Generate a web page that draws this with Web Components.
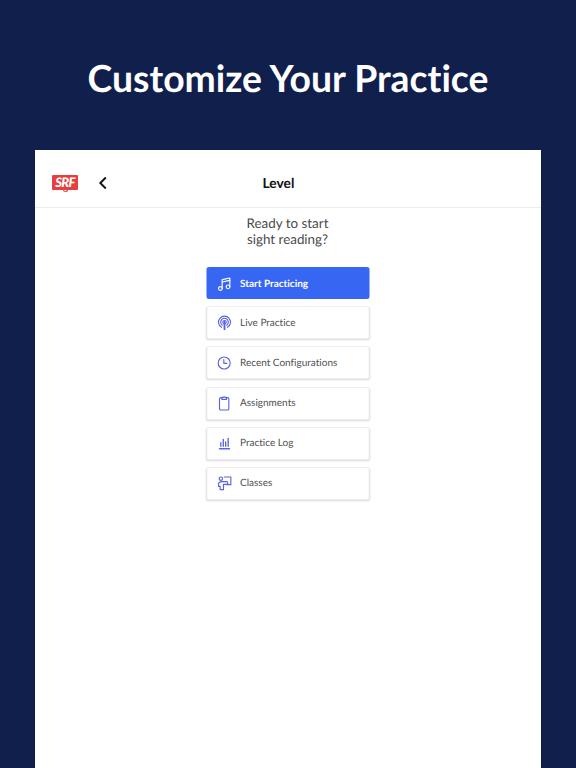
<!DOCTYPE html>
<html lang="en">
<head>
<meta charset="utf-8">
<title>Customize Your Practice</title>
<style>
  html, body { margin: 0; height: 100%; }
  body { background: #111f4d; font-family: Lato, "Open Sans", sans-serif; overflow: hidden; text-rendering: geometricPrecision; }
</style>
</head>
<body>
<promo-page>
  <span slot="title">Customize Your Practice</span>
  <app-header>Level</app-header>
  <practice-menu>
    <span slot="question">Ready to start<br>sight reading?</span>
    <menu-button icon="music" primary>Start Practicing</menu-button>
    <menu-button icon="live">Live Practice</menu-button>
    <menu-button icon="clock">Recent Configurations</menu-button>
    <menu-button icon="clipboard">Assignments</menu-button>
    <menu-button icon="chart">Practice Log</menu-button>
    <menu-button icon="classes">Classes</menu-button>
  </practice-menu>
</promo-page>
<script>
// Icon strokes, all on a 24 box
const ICONS = {
  music: '<path d="M8.500 18.500V5.500L20 3v13"/><path d="M8.500 9 20 6.500"/><circle cx="5.800" cy="18.800" r="2.800"/><circle cx="17.300" cy="16.300" r="2.800"/>',
  live: '<path d="M7.500 18.500a9 9 0 1 1 9 0"/><path d="M8.800 15.300a5.700 5.700 0 1 1 6.400 0"/><path d="M10.300 12.500a2.500 2.500 0 1 1 3.400 0"/><path d="M12 10.500V21.500" stroke-width="2.800"/>',
  clock: '<circle cx="11.500" cy="12" r="9"/><path d="M11 7V12.500h4.500"/>',
  clipboard: '<path d="M8 4H6.500a2 2 0 0 0-2 2v14.500a2 2 0 0 0 2 2h10a2 2 0 0 0 2-2V6a2 2 0 0 0-2-2H15"/><path d="M8 6.500v-3h2a1.800 1.800 0 0 1 3 0h2v3z"/>',
  chart: '<path d="M4.500 20.500h15" stroke-width="2.200"/><path d="M6.500 11.500v5.500M10.200 6.500V17M13.800 10.500V17M17.500 5V17" stroke-width="2"/>',
  classes: '<circle cx="6.500" cy="5.500" r="2.500"/><path d="M11.500 3H21.500v11.500H15"/><path d="M15 10H8.500C5 10 3 10.500 3 14v3h2.500v5H10.500V14H15a2 2 0 0 0 0-4z"/>'
};

class PromoPage extends HTMLElement {
  constructor() {
    super();
    this.attachShadow({ mode: 'open' });
    this.shadowRoot.innerHTML = `
      <style>
        :host { display: flex; flex-direction: column; height: 768px; overflow: hidden; }
        h1 {
          margin: 0;
          height: 150px;
          flex: none;
          display: flex;
          align-items: center;
          justify-content: center;
          padding-top: 5px;
          box-sizing: border-box;
          color: #fff;
          font: 700 37.300px Lato, sans-serif;
          font-variant-ligatures: none;
        }
        .card {
          flex: 1;
          margin: 0 35px;
          background: #fff;
          display: flex;
          flex-direction: column;
        }
      </style>
      <h1><slot name="title"></slot></h1>
      <div class="card"><slot></slot></div>
    `;
  }
}

class AppHeader extends HTMLElement {
  constructor() {
    super();
    this.attachShadow({ mode: 'open' });
    this.shadowRoot.innerHTML = `
      <style>
        :host {
          display: flex;
          align-items: center;
          height: 48px;
          padding: 9px 0 0 17px;
          border-bottom: 1px solid #ececee;
          flex: none;
        }
        .logo { width: 26px; height: 16px; flex: none; position: relative; display: block; }
        .logo b {
          position: absolute;
          inset: 0 0 1px 0;
          background: #e5403f;
          border-radius: 1px;
          color: #fff;
          font: italic 900 13px/15px Lato, sans-serif;
          text-align: center;
          letter-spacing: -.6px;
        }
        .logo i {
          position: absolute;
          left: 11px;
          bottom: -1px;
          width: 5px;
          height: 3px;
          border: 1px solid #e5403f;
          border-top: 0;
          border-radius: 0 0 3px 3px;
          box-sizing: border-box;
        }
        .back { width: 10px; height: 14px; margin-left: 20px; flex: none; }
        .title {
          flex: 1;
          text-align: center;
          padding: 0 92px 1px 0;
          color: #111;
          font: 700 13.800px Lato, sans-serif;
        }
      </style>
      <span class="logo"><b>SRF</b><i></i></span>
      <svg class="back" viewBox="0 0 10 14" fill="none" stroke="#111" stroke-width="1.900"><path d="M7.800 1.500 2.300 7l5.500 5.500"/></svg>
      <span class="title"><slot></slot></span>
    `;
  }
}

class PracticeMenu extends HTMLElement {
  constructor() {
    super();
    this.attachShadow({ mode: 'open' });
    this.shadowRoot.innerHTML = `
      <style>
        :host { display: block; padding-top: 7px; }
        .question {
          text-align: center;
          color: #4a4a4a;
          font: 400 13.400px/16px Lato, sans-serif;
          margin-bottom: 20px;
          padding-right: 1px;
        }
        .list { width: 163px; margin: 0 auto; display: flex; flex-direction: column; gap: 7.200px; transform: translateX(-.5px); }
      </style>
      <div class="question"><slot name="question"></slot></div>
      <div class="list"><slot></slot></div>
    `;
  }
}

class MenuButton extends HTMLElement {
  constructor() {
    super();
    this.attachShadow({ mode: 'open' });
    const icon = ICONS[this.getAttribute('icon')] || '';
    this.shadowRoot.innerHTML = `
      <style>
        :host {
          display: flex;
          align-items: center;
          height: 33px;
          box-sizing: border-box;
          padding-left: 9px;
          background: #fff;
          border: 1px solid #efeff0;
          border-radius: 2px;
          box-shadow: 0 1px 2px rgba(0,0,0,.16);
          color: #4f4f4f;
          font: 400 10px Lato, sans-serif;
          font-variant-ligatures: none;
        }
        :host([primary]) {
          height: 32px;
          padding-top: 1px;
          background: #3767f2;
          border-color: #3767f2;
          box-shadow: none;
          color: #fff;
          font-weight: 700;
        }
        svg {
          width: 16px;
          height: 16px;
          margin-right: 8px;
          flex: none;
          fill: none;
          stroke: #5a62e0;
          stroke-width: 1.700;
          stroke-linecap: round;
          stroke-linejoin: round;
        }
        :host([primary]) svg { stroke: #fff; }
      </style>
      <svg viewBox="0 0 24 24">${icon}</svg>
      <slot></slot>
    `;
  }
}

customElements.define('promo-page', PromoPage);
customElements.define('app-header', AppHeader);
customElements.define('practice-menu', PracticeMenu);
customElements.define('menu-button', MenuButton);
</script>
</body>
</html>
